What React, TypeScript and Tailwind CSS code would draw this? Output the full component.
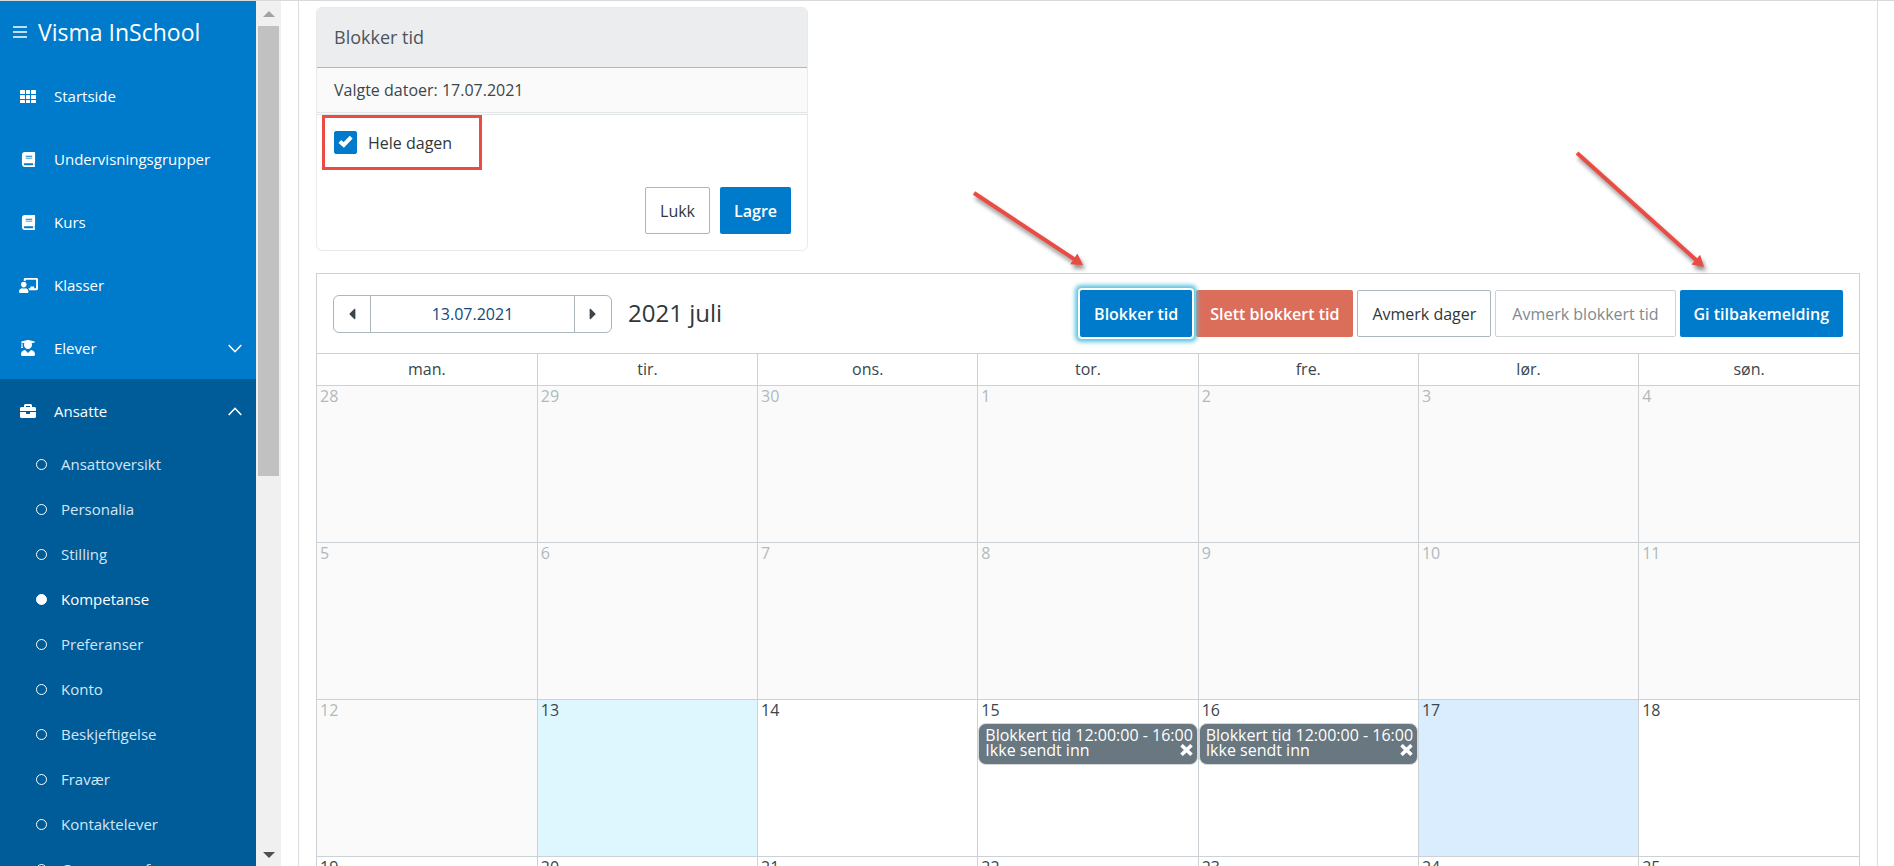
import { useState } from "react";
import { FaBook, FaBriefcase, FaCaretLeft, FaCaretRight, FaChalkboardTeacher, FaUserGraduate } from "react-icons/fa";

const GridIcon = () => (
  <svg width="16" height="13" viewBox="0 0 16 13" fill="currentColor">
    {[0, 5, 10].map((y) =>
      [0, 6, 11].map((x) => <rect key={`${x}-${y}`} x={x} y={y} width={x === 6 ? 4 : 5} height={y === 10 ? 3 : 4} rx="0.6" />)
    )}
  </svg>
);

const menu = [
  { label: "Startside", icon: <GridIcon /> },
  { label: "Undervisningsgrupper", icon: <FaBook size={15} /> },
  { label: "Kurs", icon: <FaBook size={15} /> },
  { label: "Klasser", icon: <FaChalkboardTeacher size={19} /> },
  { label: "Elever", icon: <FaUserGraduate size={16} />, chevron: "down" },
  { label: "Ansatte", icon: <FaBriefcase size={16} />, chevron: "up" },
];

const subMenu = [
  "Ansattoversikt",
  "Personalia",
  "Stilling",
  "Kompetanse",
  "Preferanser",
  "Konto",
  "Beskjeftigelse",
  "Fravær",
  "Kontaktelever",
  "Grupper og fag",
];

const weekdays = ["man.", "tir.", "ons.", "tor.", "fre.", "lør.", "søn."];

const weeks = [
  [28, 29, 30, 1, 2, 3, 4],
  [5, 6, 7, 8, 9, 10, 11],
  [12, 13, 14, 15, 16, 17, 18],
  [19, 20, 21, 22, 23, 24, 25],
];

const blocked = [15, 16];

function Chevron({ dir }: { dir: string }) {
  return (
    <svg width="14" height="9" viewBox="0 0 14 9" fill="none" stroke="currentColor" strokeWidth="1.6">
      <path d={dir === "down" ? "M.7 1 7 7.7 13.3 1" : "M.7 8 7 1.3 13.3 8"} />
    </svg>
  );
}

function Sidebar() {
  return (
    <nav className="w-64 shrink-0 h-full overflow-hidden bg-[#007aca] text-white text-[15px] font-medium">
      <div className="flex items-center h-[63px] pb-px pl-[13px] gap-[11px]">
        <button aria-label="Meny">
          <svg width="14" height="12" viewBox="0 0 14 12" stroke="currentColor" strokeWidth="1.4">
            <path d="M0 1h14M0 6h14M0 11h14" />
          </svg>
        </button>
        <span className="text-[23px]">Visma InSchool</span>
      </div>
      {menu.map((m) => (
        <a
          key={m.label}
          href="#"
          className={`flex items-center h-[63px] pt-px pl-[17px] pr-3.5 ${m.chevron === "up" ? "bg-[#005b99]" : ""}`}
        >
          <span className="w-[22px] mr-[15px] flex justify-center">{m.icon}</span>
          <span className="flex-1">{m.label}</span>
          {m.chevron && <Chevron dir={m.chevron} />}
        </a>
      ))}
      <ul className="bg-[#005b99]">
        {subMenu.map((s) => {
          const active = s === "Kompetanse";
          return (
            <li key={s}>
              <a href="#" className={`flex items-center h-[45px] pl-9 gap-3.5 ${active ? "" : "text-[#d3e6f4]"}`}>
                <span className={`size-[11px] rounded-full border border-white ${active ? "bg-white" : ""}`} />
                {s}
              </a>
            </li>
          );
        })}
      </ul>
    </nav>
  );
}

function Scrollbar() {
  return (
    <div className="w-[25px] shrink-0 h-full bg-[#f0f0f0] flex flex-col items-center">
      <svg className="mt-2.5 mb-[9px] shrink-0" width="12" height="6" viewBox="0 0 12 6" fill="#a3a3a3">
        <path d="M0 6 6 0l6 6z" />
      </svg>
      <div className="w-[21px] h-[52%] bg-[#c1c1c1]" />
      <svg className="mt-auto mb-2 shrink-0" width="12" height="6" viewBox="0 0 12 6" fill="#505050">
        <path d="M0 0h12L6 6z" />
      </svg>
    </div>
  );
}

function BlockForm() {
  const [allDay, setAllDay] = useState(true);
  return (
    <div className="w-[492px] h-[244px] flex flex-col rounded-md border border-[#e8eaeb] overflow-hidden">
      <h2 className="h-[60px] flex items-center px-[17px] text-[18px] bg-[#ecedee] border-b border-[#adb6bb] text-[#4c555b]">
        Blokker tid
      </h2>
      <p className="h-[47px] flex items-center px-[17px] bg-[#fafafa] border-b-3 border-double border-[#e4e7e8]">
        Valgte datoer: 17.07.2021
      </p>
      <div className="px-[5px]">
        <label className="w-40 h-[55px] flex items-center gap-[11px] px-[9px] border-3 border-[#ea4b43] text-[#2f373b] font-medium">
          <span className="relative flex">
            <input
              type="checkbox"
              checked={allDay}
              onChange={() => setAllDay(!allDay)}
              className="appearance-none size-[23px] rounded-xs border border-[#007aca] checked:bg-[#007aca]"
            />
            {allDay && (
              <svg className="absolute left-1 top-1 pointer-events-none" width="15" height="14" viewBox="0 0 15 14" fill="none" stroke="#fff" strokeWidth="4">
                <path d="M1.8 6.5 5.8 10 13.2 2.2" />
              </svg>
            )}
          </span>
          Hele dagen
        </label>
      </div>
      <div className="mt-auto mb-4 mr-4 flex justify-end gap-2.5">
        <button className="h-[47px] px-3.5 rounded-xs border border-[#adb6bb] text-[#2f373b] font-medium">Lukk</button>
        <button className="h-[47px] px-3.5 rounded-xs bg-[#007aca] text-white font-semibold">Lagre</button>
      </div>
    </div>
  );
}

function Arrow({ x, y, className }: { x: number; y: number; className: string }) {
  // line from the top left corner to a head at (x, y)
  const len = Math.hypot(x, y);
  const angle = (Math.atan2(y, x) * 180) / Math.PI;
  return (
    <svg
      className={`absolute overflow-visible pointer-events-none drop-shadow-[2px_4px_2px_rgba(0,0,0,0.45)] ${className}`}
      width={x}
      height={y}
      fill="#ea4b43"
    >
      <g transform={`rotate(${angle})`}>
        <path d={`M0 -2H${len - 11}V-6.5L${len} 0 ${len - 11} 6.5V2H0z`} />
      </g>
    </svg>
  );
}

function Toolbar() {
  return (
    <div className="h-[79px] flex items-center px-4">
      <div className="flex h-[38px] border border-[#adb6bb] rounded-md text-[#3a464c]">
        <button aria-label="Forrige" className="w-9 flex items-center justify-center">
          <FaCaretLeft size={18} />
        </button>
        <input
          aria-label="Dato"
          defaultValue="13.07.2021"
          className="w-[205px] border-x border-[#adb6bb] text-center text-[#0f4a7c]"
        />
        <button aria-label="Neste" className="w-9 flex items-center justify-center">
          <FaCaretRight size={18} />
        </button>
      </div>
      <h1 className="ml-4 pb-0.5 text-[24px] text-[#2f373b]">2021 juli</h1>
      <div className="ml-auto flex gap-1 text-[#2f373b] font-medium">
        <div className="relative">
          <button className="relative z-10 h-[47px] px-3.5 rounded-xs bg-[#007aca] text-white font-semibold shadow-[0_0_0_2px_#fff,0_0_4px_5px_#5bc4e0]">
            Blokker tid
          </button>
          <Arrow x={109} y={72} className="right-[109px] bottom-[72px]" />
        </div>
        <button className="h-[47px] px-3.5 rounded-xs bg-[#db6e5b] text-white font-semibold">Slett blokkert tid</button>
        <button className="h-[47px] px-3.5 rounded-xs border border-[#adb6bb]">Avmerk dager</button>
        <button className="h-[47px] px-4 rounded-xs border border-[#cdd2d5] text-[#808a90]">Avmerk blokkert tid</button>
        <div className="relative">
          <button className="h-[47px] px-3.5 rounded-xs bg-[#007aca] text-white font-semibold">Gi tilbakemelding</button>
          <Arrow x={127} y={114} className="right-[139px] bottom-[70px]" />
        </div>
      </div>
    </div>
  );
}

function BlockedEvent() {
  return (
    <div className="relative mt-[3px] h-[42px] pl-1.5 pt-1 rounded-lg border border-[#d5d9db] bg-[#687780] text-white leading-[15px] whitespace-nowrap overflow-hidden">
      <div>Blokkert tid 12:00:00 - 16:00</div>
      <div>Ikke sendt inn</div>
      <button aria-label="Fjern" className="absolute right-1 top-5">
        <svg width="13" height="12" viewBox="0 0 13 12" stroke="#fff" strokeWidth="3.6">
          <path d="M1.5 1.2 11.5 10.8M11.5 1.2 1.5 10.8" />
        </svg>
      </button>
    </div>
  );
}

function dayClass(day: number, week: number) {
  if (week < 2 || day === 12) return "bg-[#fafafa] text-[#b0b9bd]";
  if (day === 13) return "bg-[#def7ff]";
  if (day === 17) return "bg-[#daedff]";
  return "";
}

function Calendar() {
  return (
    <div className="mt-[22px] border border-[#cbd1d4]">
      <Toolbar />
      <table className="w-full table-fixed border-collapse">
        <thead>
          <tr>
            {weekdays.map((d) => (
              <th key={d} className="h-8 pt-0 pb-0.5 font-normal border border-[#cbd1d4] first:border-l-0 last:border-r-0">
                {d}
              </th>
            ))}
          </tr>
        </thead>
        <tbody>
          {weeks.map((week, w) => (
            <tr key={w}>
              {week.map((day) => (
                <td
                  key={day}
                  className={`h-[157px] p-0 align-top border border-[#cbd1d4] first:border-l-0 last:border-r-0 ${dayClass(day, w)}`}
                >
                  <div className="pl-[3px] h-5 leading-5">{day}</div>
                  {blocked.includes(day) && <BlockedEvent />}
                </td>
              ))}
            </tr>
          ))}
        </tbody>
      </table>
    </div>
  );
}

export default function App() {
  return (
    <div className="h-screen flex overflow-hidden border-t border-[#d9d9d9] bg-white font-['Open_Sans',sans-serif] text-[16px] text-[#3a464c]">
      <Sidebar />
      <Scrollbar />
      <main className="flex-1 min-w-0 ml-[17px] mr-4 pl-[17px] pr-[17px] pt-1.5 border-x border-[#dcdfe0]">
        <BlockForm />
        <Calendar />
      </main>
    </div>
  );
}
